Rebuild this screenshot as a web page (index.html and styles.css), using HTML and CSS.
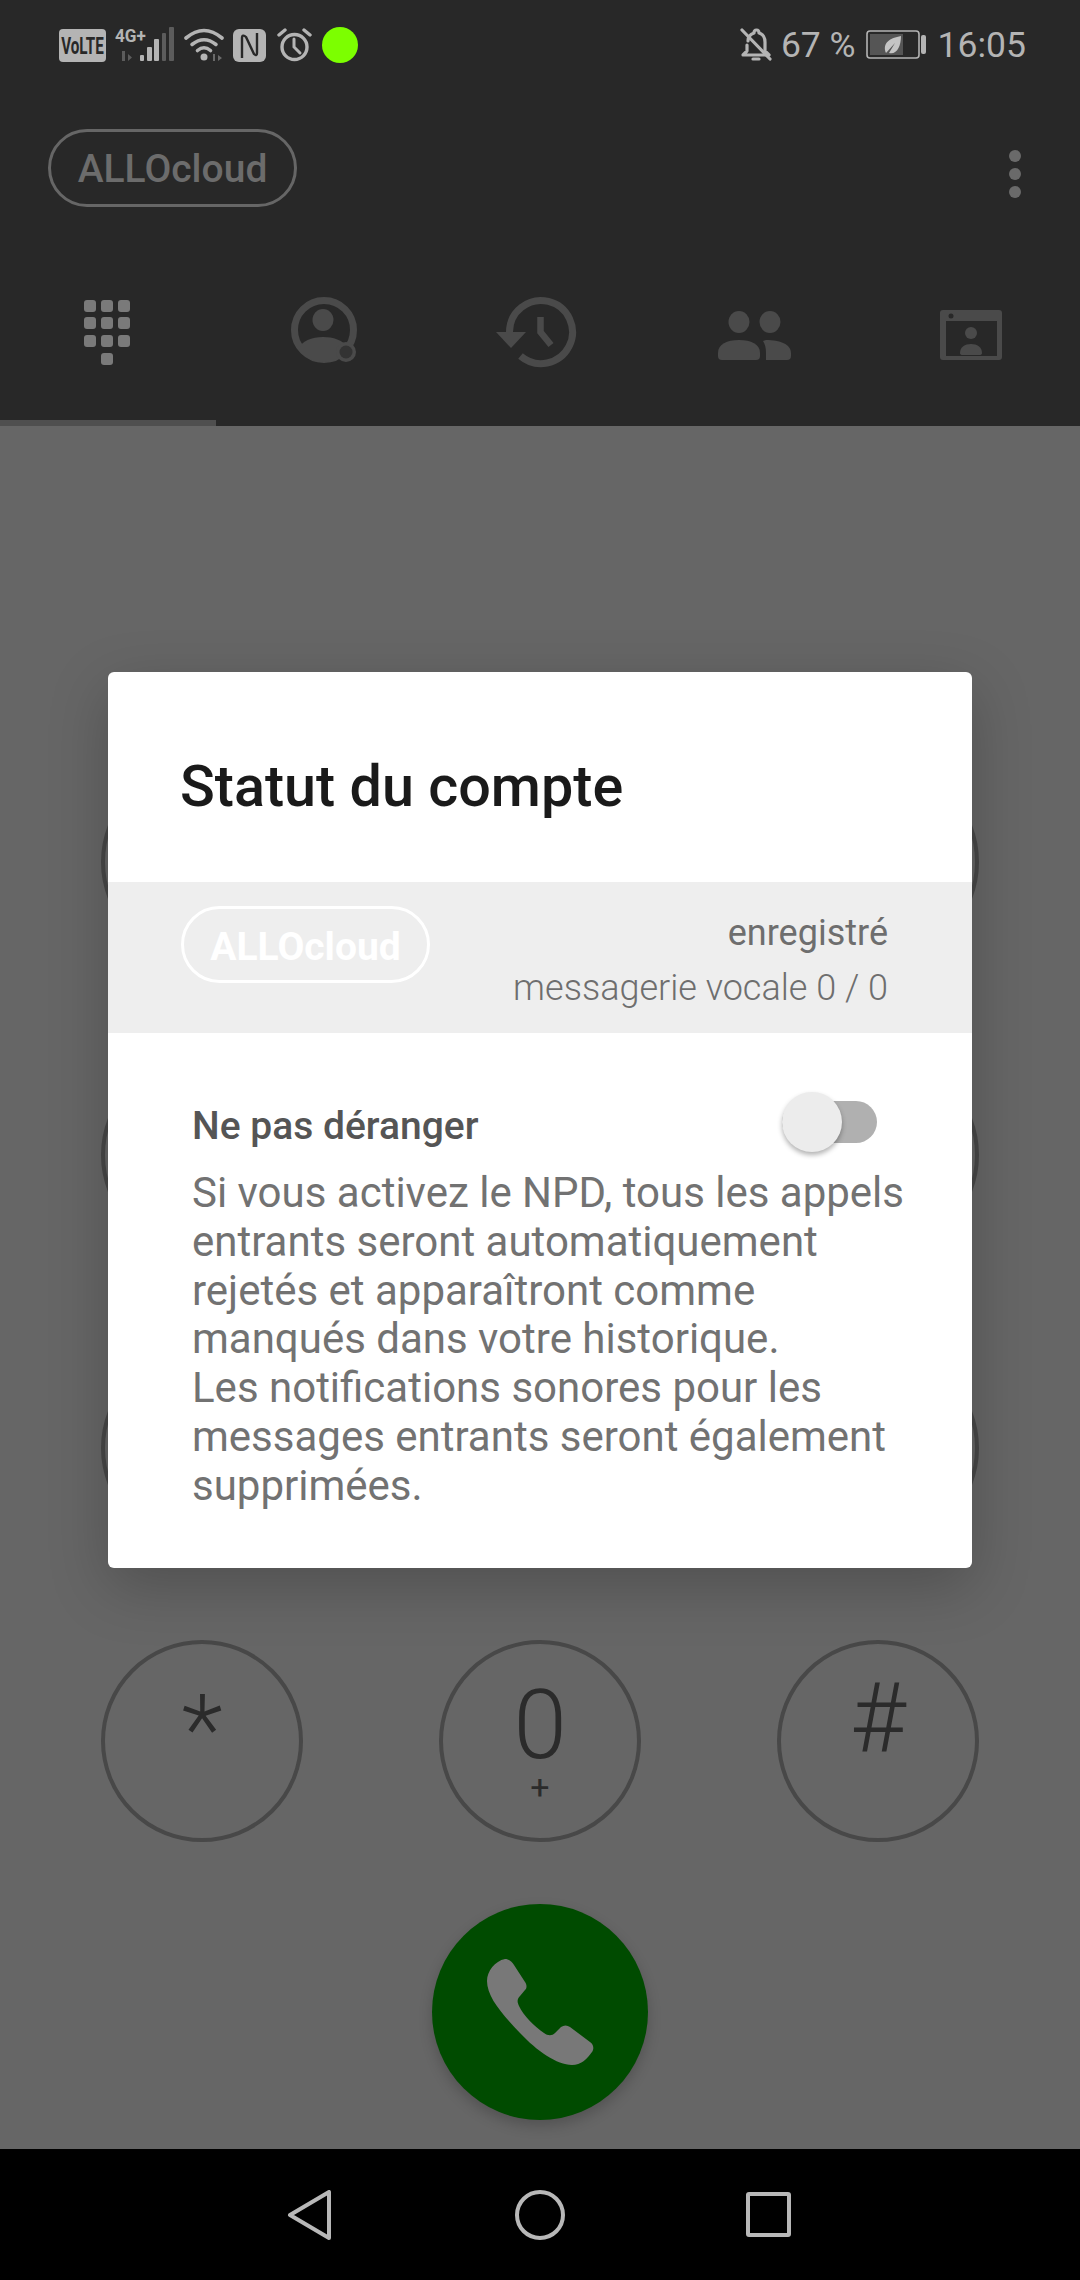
FILE: index.html
```html
<!DOCTYPE html>
<html lang="fr">
<head>
  <meta charset="UTF-8" />
  <meta name="viewport" content="width=device-width, initial-scale=1.0" />
  <title>ALLOcloud</title>
  <link rel="stylesheet" href="styles.css">
</head>
<body>

<div class="screen">

  <header class="top">
    <!-- Barre d'etat -->
    <div class="statusbar">
      <svg class="st" width="47" height="33" viewBox="0 0 47 33">
        <rect width="47" height="33" rx="4" fill="#b4b4b4"/>
        <text transform="translate(23.500 24.500) scale(.66 1)" text-anchor="middle" class="st-volte">VoLTE</text>
      </svg>
      <svg class="st" width="60" height="44" viewBox="0 -4 60 44">
        <text transform="translate(0 15) scale(.9 1)" class="st-net">4G+</text>
        <path d="M7 24v10h3V24zM13 27l4 3.500-4 3.500z" fill="#5c5c5c"/>
        <rect x="25" y="28" width="4" height="6" rx="1" fill="#b4b4b4"/>
        <rect x="32" y="20" width="5" height="14" rx="1" fill="#b4b4b4"/>
        <rect x="39" y="12" width="5" height="22" rx="1" fill="#b4b4b4"/>
        <rect x="47" y="6" width="4" height="28" rx="1" fill="#5c5c5c"/>
        <rect x="54" y="0" width="5" height="34" rx="1" fill="#5c5c5c"/>
      </svg>
      <svg class="st" width="40" height="34" viewBox="0 0 40 34" fill="none" stroke="#b4b4b4" stroke-width="3.600" stroke-linecap="round">
        <path d="M2 10Q20-5 38 10"/>
        <path d="M8 16.500Q20 7 32 16.500"/>
        <path d="M13.500 22.500Q20 17 26.500 22.500"/>
        <circle cx="20" cy="29" r="3.500" fill="#b4b4b4" stroke="none"/>
        <path d="M29 26v7h2v-7zM34 27l4 3-4 3z" fill="#6a6a6a" stroke="none"/>
      </svg>
      <svg class="st" width="33" height="33" viewBox="0 0 33 33">
        <rect width="33" height="33" rx="6" fill="#b4b4b4"/>
        <path d="M9 29V9c0-3 2-3 4-1l8 17c2 2 3 1 3-1V4" fill="none" stroke="#282828" stroke-width="2.400"/>
      </svg>
      <svg class="st" width="38" height="34" viewBox="0 0 38 34" fill="none" stroke="#b4b4b4" stroke-linecap="round">
        <circle cx="19.500" cy="19" r="12.500" stroke-width="3.400"/>
        <path d="M19 11v8l6 6" stroke-width="3"/>
        <path d="M4 7l6-5M35 7l-6-5" stroke-width="3.400"/>
      </svg>
      <span class="st-dot"></span>

      <div class="st-right">
        <svg width="32" height="34" viewBox="0 0 32 34" fill="none" stroke="#b4b4b4" stroke-width="3.200" stroke-linecap="round" stroke-linejoin="round">
          <path d="M8 13c0-5 3-7 6-8 0-4 5-4 5 0 4 1 6 5 6 9v9l4 4H3l4-4v-6"/>
          <path d="M2 2l28 29"/>
          <path d="M13 31h6"/>
        </svg>
        <span class="st-text">67 %</span>
        <svg class="st-batt" width="61" height="30" viewBox="0 0 61 30">
          <rect x="1" y="1" width="52" height="27" rx="3" fill="none" stroke="#b4b4b4" stroke-width="1.600"/>
          <rect x="4" y="4" width="33" height="21" fill="#555"/>
          <rect x="55" y="5" width="5" height="19" rx="2" fill="#b4b4b4"/>
          <path d="M20 23c-4-10 4-15 15-17 0 10-4 19-12 17l6-10z" fill="#c4c4c4"/>
        </svg>
        <span class="st-text">16:05</span>
      </div>
    </div>

    <div class="toolbar">
      <span class="account">ALLOcloud</span>
      <div class="overflow"><i></i><i></i><i></i></div>
    </div>

    <nav class="tabs">
      <div class="tab active">
        <svg width="80" height="80" viewBox="0 0 80 80" fill="#7a7a7a">
          <rect x="16" y="9" width="12" height="12" rx="3"/><rect x="33" y="9" width="12" height="12" rx="3"/><rect x="50" y="9" width="12" height="12" rx="3"/>
          <rect x="16" y="26" width="12" height="12" rx="3"/><rect x="33" y="26" width="12" height="12" rx="3"/><rect x="50" y="26" width="12" height="12" rx="3"/>
          <rect x="16" y="44" width="12" height="12" rx="3"/><rect x="33" y="44" width="12" height="12" rx="3"/><rect x="50" y="44" width="12" height="12" rx="3"/>
          <rect x="33" y="62" width="12" height="12" rx="3"/>
        </svg>
      </div>
      <div class="tab">
        <svg width="80" height="80" viewBox="0 0 80 80" fill="#4a4a4a">
          <circle cx="40" cy="39" r="29.500" fill="none" stroke="#4a4a4a" stroke-width="7"/>
          <ellipse cx="39" cy="29" rx="10.500" ry="11"/>
          <path d="M15 58c2-8 13-12 24-12 10 0 20 3 24 10L50 70q-10 2-20 0-10-4-15-12z"/>
          <circle cx="62" cy="61" r="10" fill="#4a4a4a"/>
          <circle cx="62" cy="61" r="6.500" fill="#333"/>
        </svg>
      </div>
      <div class="tab">
        <svg width="80" height="80" viewBox="0 0 80 80" fill="#4a4a4a">
          <path d="M20.500 65A31.500 31.500 0 1 0 9.500 41" fill="none" stroke="#4a4a4a" stroke-width="7"/>
          <path d="M-4 41H26L11 57z"/>
          <path d="M40.500 26V41L51 54" fill="none" stroke="#4a4a4a" stroke-width="6.500"/>
        </svg>
      </div>
      <div class="tab">
        <svg width="80" height="80" viewBox="0 0 80 80" fill="#4a4a4a">
          <ellipse cx="23" cy="31" rx="10.500" ry="11"/>
          <ellipse cx="54" cy="31" rx="10.500" ry="11"/>
          <path d="M2 62c0-9 9-13 21-13s21 4 21 13v3q0 4-4 4H6q-4 0-4-4z"/>
          <path d="M50 49c14 0 25 4 25 13v3q0 4-4 4H50V62c0-5-1-9-3-12z"/>
        </svg>
      </div>
      <div class="tab">
        <svg width="80" height="80" viewBox="0 0 80 80" fill="#4a4a4a">
          <path fill-rule="evenodd" d="M11 19h56q3 0 3 3v44q0 3-3 3H11q-3 0-3-3V22q0-3 3-3zM14 30v35h51V30z"/>
          <circle cx="19" cy="25" r="2.500" fill="#282828"/>
          <circle cx="39" cy="42" r="6"/>
          <path d="M28 62c0-6 5-9 11-9s11 3 11 9q0 2-3 2H31q-3 0-3-2z"/>
        </svg>
      </div>
    </nav>
  </header>

  <!-- Clavier -->
  <main class="dialer">
    <div class="keypad">
      <button class="key"></button><button class="key"></button><button class="key"></button>
      <button class="key"></button><button class="key"></button><button class="key"></button>
      <button class="key"></button><button class="key"></button><button class="key"></button>
      <button class="key key-star"><span class="key-main">*</span></button>
      <button class="key"><span class="key-main">0</span><span class="key-sub">+</span></button>
      <button class="key key-hash"><span class="key-main">#</span></button>
    </div>
    <button class="call">
      <svg width="107" height="107" viewBox="0 0 107 107">
        <path fill="#787878" d="M18 0C22 0 25 3 27 6L38 23C40 26 40 29 38 31L33 37C30 40 30 43 32 47C36 56 48 68 57 74C61 77 65 77 68 74L74 68C77 66 80 66 83 68L103 83C107 86 107 90 105 93C100 100 94 106 85 106C70 106 50 92 33 74C15 55 0 38 0 22C0 12 8 2 18 0Z"/>
      </svg>
    </button>
  </main>

  <footer class="navbar">
    <svg width="50" height="50" viewBox="0 0 50 50" fill="none" stroke="#b8b8b8" stroke-width="4" stroke-linejoin="round">
      <path d="M5 25L44 2V48z"/>
    </svg>
    <svg width="50" height="50" viewBox="0 0 50 50" fill="none" stroke="#b8b8b8" stroke-width="4">
      <circle cx="25" cy="25" r="23"/>
    </svg>
    <svg width="50" height="50" viewBox="0 0 50 50" fill="none" stroke="#b8b8b8" stroke-width="4" stroke-linejoin="round">
      <rect x="3" y="4" width="41" height="41" rx="1"/>
    </svg>
  </footer>

  <!-- Fenetre Statut du compte -->
  <section class="dialog">
    <h2 class="dialog-title">Statut du compte</h2>
    <div class="account-row">
      <span class="account light">ALLOcloud</span>
      <div class="account-state">
        <span class="state-main">enregistré</span>
        <span class="state-sub">messagerie vocale 0 / 0</span>
      </div>
    </div>
    <div class="dnd">
      <div class="dnd-head">
        <span class="dnd-label">Ne pas déranger</span>
        <span class="switch"><span class="switch-knob"></span></span>
      </div>
      <p class="dnd-text">Si vous activez le NPD, tous les appels entrants seront automatiquement rejetés et apparaîtront comme manqués dans votre historique.<br>Les notifications sonores pour les messages entrants seront également supprimées.</p>
    </div>
  </section>

</div>

</body>
</html>
```

FILE: styles.css
```css
* {
  box-sizing: border-box;
}
body {
  margin: 0;
  background: #666;
  font-family: Roboto, "Liberation Sans", sans-serif;
}
.screen {
  position: relative;
  width: 1080px;
  height: 2280px;
  overflow: hidden;
  display: flex;
  flex-direction: column;
}

/* haut de page */
.top {
  background: #282828;
}
.statusbar {
  height: 90px;
  padding: 0 54px 0 59px;
  display: flex;
  align-items: center;
  gap: 9px;
}
.st {
  display: block;
}
.st-volte {
  font-family: "Liberation Sans Narrow", Roboto, sans-serif;
  font-weight: bold;
  font-size: 23px;
  fill: #282828;
}
.st-net {
  font-family: "Liberation Sans Narrow", Roboto, sans-serif;
  font-weight: bold;
  font-size: 19px;
  fill: #b4b4b4;
}
.st-dot {
  width: 36px;
  height: 36px;
  border-radius: 50%;
  background: #7cff00;
}
.st-right {
  margin-left: auto;
  display: flex;
  align-items: center;
  gap: 9px;
  color: #b4b4b4;
}
.st-text {
  font-size: 35.500px;
  line-height: 40px;
}
.st-batt {
  margin-left: 1px;
  margin-right: 2px;
}

.toolbar {
  height: 156px;
  padding: 0 59px 0 48px;
  display: flex;
  align-items: center;
  justify-content: space-between;
}
.account {
  display: inline-block;
  width: 249px;
  height: 78px;
  border: 3px solid #666;
  border-radius: 39px;
  color: #6c6c6c;
  font-size: 39px;
  font-weight: 500;
  line-height: 74px;
  text-align: center;
}
.overflow {
  margin-top: 12px;
  display: flex;
  flex-direction: column;
  gap: 6px;
}
.overflow i {
  width: 12px;
  height: 12px;
  border-radius: 50%;
  background: #6a6a6a;
}

.tabs {
  display: flex;
  height: 180px;
}
.tab {
  width: 216px;
  padding-top: 45px;
  display: flex;
  justify-content: center;
  align-items: flex-start;
}
.tab svg {
  overflow: visible;
}
.tab.active {
  border-bottom: 6px solid #4f4f4f;
}

/* clavier */
.dialer {
  flex: 1;
  padding: 335px 101px 0;
  display: flex;
  flex-direction: column;
  align-items: center;
}
.keypad {
  width: 100%;
  display: grid;
  grid-template-columns: repeat(3, 202px);
  justify-content: space-between;
  row-gap: 91px;
}
.key {
  width: 202px;
  height: 202px;
  padding: 33px 0 0;
  border: 4px solid #484848;
  border-radius: 50%;
  background: none;
  color: #2b2b2b;
  font-family: inherit;
  display: flex;
  flex-direction: column;
  align-items: center;
}
.key-star {
  padding-top: 38px;
}
.key-hash {
  padding-top: 26px;
}
.key-main {
  font-size: 96px;
  font-weight: 300;
  line-height: 96px;
}
.key-sub {
  font-size: 34px;
  line-height: 28px;
}
.call {
  width: 216px;
  height: 216px;
  margin-top: 62px;
  border: none;
  border-radius: 50%;
  background: #004b00;
  box-shadow: 0 6px 14px rgba(0, 0, 0, 0.2);
  display: flex;
  align-items: center;
  justify-content: center;
  padding: 0;
}

.navbar {
  height: 131px;
  background: #000;
  display: flex;
  align-items: center;
  justify-content: center;
  gap: 180px;
}

/* fenetre */
.dialog {
  position: absolute;
  top: 672px;
  left: 108px;
  width: 864px;
  height: 896px;
  background: #fff;
  border-radius: 6px;
  box-shadow: 0 18px 60px rgba(0, 0, 0, 0.22);
}
.dialog-title {
  margin: 0;
  height: 210px;
  padding: 82px 0 0 72px;
  color: #1a1a1a;
  font-size: 57.500px;
  font-weight: 500;
  line-height: 66px;
}
.account-row {
  height: 151px;
  padding: 24px 84px 0 73px;
  background: #eee;
  display: flex;
  justify-content: space-between;
  align-items: flex-start;
}
.account.light {
  height: 77px;
  border-color: #fff;
  color: #fff;
  font-weight: 700;
  line-height: 76px;
}
.account-state {
  display: flex;
  flex-direction: column;
  align-items: flex-end;
  color: #6e6e6e;
  font-size: 36px;
  line-height: 55px;
  margin-top: 0;
}
.state-sub {
  font-weight: 300;
}
.dnd {
  padding: 58px 59px 0 84px;
}
.dnd-head {
  height: 62px;
  padding-right: 36px;
  display: flex;
  justify-content: space-between;
  align-items: center;
}
.dnd-label {
  color: #555;
  font-size: 39px;
  font-weight: 500;
  padding-top: 8px;
}
.switch {
  position: relative;
  width: 95px;
  height: 42px;
  border-radius: 21px;
  background: #b0b0b0;
}
.switch-knob {
  position: absolute;
  left: 0;
  top: -9px;
  width: 60px;
  height: 60px;
  border-radius: 50%;
  background: #ececec;
  box-shadow: 0 3px 5px rgba(0, 0, 0, 0.3);
}
.dnd-text {
  margin: 16px 0 0;
  color: #727272;
  font-size: 42px;
  line-height: 48.800px;
}
```
